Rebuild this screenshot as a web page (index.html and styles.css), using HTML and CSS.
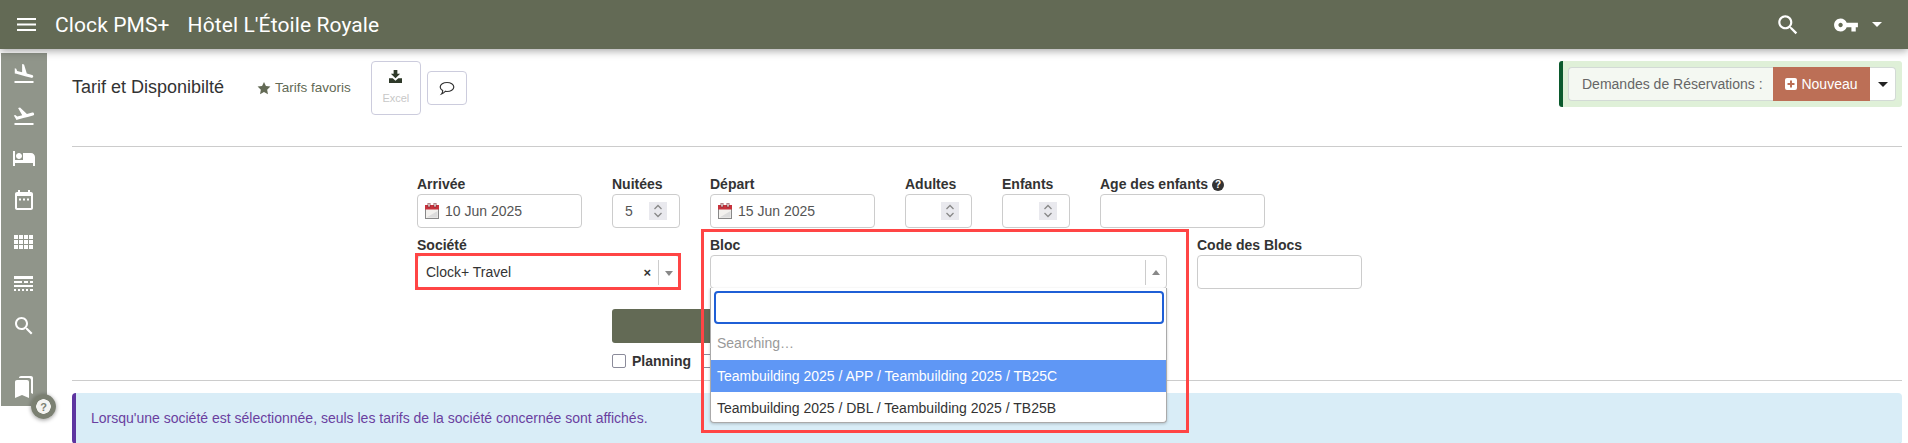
FILE: index.html
```html
<!DOCTYPE html>
<html lang="fr">
<head>
<meta charset="utf-8">
<title>Tarif et Disponibilté</title>
<link rel="stylesheet" href="styles.css">
</head>
<body>
<header class="topbar">
  <svg class="burger" viewBox="0 0 19 13"><rect width="19" height="2" y="0"/><rect width="19" height="2" y="5.5"/><rect width="19" height="2" y="11"/></svg>
  <span class="brand">Clock PMS+</span>
  <span class="hotel">Hôtel L'Étoile Royale</span>
  <svg class="top-search" viewBox="0 0 24 24"><path d="M15.5 14h-.79l-.28-.27C15.41 12.59 16 11.11 16 9.5 16 5.91 13.09 3 9.5 3S3 5.91 3 9.5 5.91 16 9.5 16c1.61 0 3.09-.59 4.23-1.57l.27.28v.79l5 4.99L20.49 19l-4.99-5zm-6 0C7.01 14 5 11.99 5 9.5S7.01 5 9.5 5 14 7.01 14 9.5 11.99 14 9.5 14z"/></svg>
  <svg class="top-key" viewBox="0 0 24 24"><path d="M12.65 10C11.83 7.67 9.61 6 7 6c-3.31 0-6 2.69-6 6s2.69 6 6 6c2.61 0 4.83-1.67 5.65-4H17v4h4v-4h2v-4H12.65zM7 14c-1.1 0-2-.9-2-2s.9-2 2-2 2 .9 2 2-.9 2-2 2z"/></svg>
  <span class="top-caret"></span>
</header>

<div class="shell">
  <nav class="sidebar">
    <svg class="nav-icon" viewBox="0 0 24 24"><path d="M2.5 19h19v2h-19v-2zm7.18-5.73l4.35 1.16 5.31 1.42c.8.21 1.62-.26 1.84-1.06.21-.8-.26-1.62-1.06-1.84l-5.31-1.42-2.76-9.02L10.12 2v8.28L5.15 8.95l-.93-2.32-1.45-.39v5.17l1.6.43 5.31 1.43z"/></svg>
    <svg class="nav-icon" viewBox="0 0 24 24"><path d="M2.5 19h19v2h-19v-2zm19.57-9.36c-.21-.8-1.04-1.28-1.84-1.06L14.92 10l-6.9-6.43-1.93.51 4.14 7.17-4.97 1.33-1.97-1.54-1.45.39 1.82 3.16.77 1.33 1.6-.43 5.31-1.42 4.35-1.16L21 11.49c.81-.23 1.28-1.05 1.07-1.85z"/></svg>
    <svg class="nav-icon" viewBox="0 0 24 24"><path d="M7 13c1.66 0 3-1.34 3-3S8.66 7 7 7s-3 1.34-3 3 1.34 3 3 3zm12-6h-8v7H3V5H1v15h2v-3h18v3h2v-9c0-2.21-1.79-4-4-4z"/></svg>
    <svg class="nav-icon" viewBox="0 0 24 24"><path d="M19 4h-1V2h-2v2H8V2H6v2H5c-1.1 0-2 .9-2 2v14c0 1.1.9 2 2 2h14c1.1 0 2-.9 2-2V6c0-1.1-.9-2-2-2zm0 16H5V8h14v12z"/><rect x="7" y="10.5" width="2" height="2"/><rect x="11" y="10.5" width="2" height="2"/><rect x="15" y="10.5" width="2" height="2"/></svg>
    <svg class="nav-icon" viewBox="0 0 24 24"><path d="M2 5h4v4H2zM7 5h4v4H7zM12 5h4v4h-4zM17 5h4v4h-4zM2 10h4v4H2zM7 10h4v4H7zM12 10h4v4h-4zM17 10h4v4h-4zM2 15h4v4H2zM7 15h4v4H7zM12 15h4v4h-4zM17 15h4v4h-4z"/></svg>
    <svg class="nav-icon" viewBox="0 0 24 24"><path d="M2 4h19v3H2zM2 9h8v2H2zM12 9h4v2h-4zM18 9h3v2h-3zM2 13h19v2H2zM2 17h2v2H2zM6 17h2v2H6zM10 17h2v2h-2zM14 17h2v2h-2zM18 17h3v2h-3z"/></svg>
    <svg class="nav-icon" viewBox="0 0 24 24"><path d="M15.5 14h-.79l-.28-.27C15.41 12.59 16 11.11 16 9.5 16 5.91 13.09 3 9.5 3S3 5.91 3 9.5 5.91 16 9.5 16c1.61 0 3.09-.59 4.23-1.57l.27.28v.79l5 4.99L20.49 19l-4.99-5zm-6 0C7.01 14 5 11.99 5 9.5S7.01 5 9.5 5 14 7.01 14 9.5 11.99 14 9.5 14z"/></svg>
    <span class="nav-sep"></span>
    <svg class="nav-icon" viewBox="0 0 24 24"><path d="M19 18l2 1V3c0-1.1-.9-2-2-2H8.99C7.89 1 7 1.9 7 3h10c1.1 0 2 .9 2 2v13zM15 5H5c-1.1 0-2 .9-2 2v16l7-3 7 3V7c0-1.1-.9-2-2-2z"/></svg>
    <span class="help">?</span>
  </nav>

  <main class="main">
    <section class="page-head">
      <h1 class="title">Tarif et Disponibilté</h1>
      <span class="favs">
        <svg class="star" viewBox="0 0 24 24"><path d="M12 1.5l3.3 7 7.7 1-5.6 5.3 1.4 7.7-6.800-3.700-6.800 3.700 1.400-7.700L1 9.500l7.700-1z"/></svg>
        Tarifs favoris
      </span>
      <button class="excel-btn">
        <svg class="dl-icon" viewBox="0 0 14 14"><path d="M5 0h4v4h3L7 9 2 4h3zM0 9h4l3 2.500L10 9h4v5H0z"/></svg>
        <span>Excel</span>
      </button>
      <button class="comment-btn">
        <svg class="comment-icon" viewBox="0 0 16 15"><path d="M8 1.500c3.700 0 6.800 1.900 6.800 4.500S11.700 10.500 8 10.500c-.6 0-1.200 0-1.700-.2-.9.900-2.300 2.200-3.800 2.700.8-1 1.300-2 1.200-3.400C2.200 8.800 1.200 7.500 1.200 6c0-2.600 3.100-4.500 6.800-4.500z"/></svg>
      </button>
      <div class="requests">
        <span class="req-label">Demandes de Réservations :</span>
        <button class="req-new">
          <svg class="plus" viewBox="0 0 12 12"><path d="M2 0h8a2 2 0 0 1 2 2v8a2 2 0 0 1-2 2H2a2 2 0 0 1-2-2V2a2 2 0 0 1 2-2zm3 2.500v2.500H2.500v2H5v2.500h2V7h2.500V5H7V2.500z"/></svg>
          Nouveau
        </button>
        <button class="req-caret"><span></span></button>
      </div>
    </section>

    <section class="form">
      <div class="row">
        <div class="field w-date">
          <label>Arrivée</label>
          <div class="box">
            <svg class="cal" viewBox="0 0 14 16"><rect x=".5" y="2.500" width="13" height="13" fill="#f3f1ee" stroke="#888"/><rect x="0" y="2" width="14" height="4.500" fill="#c8323c"/><path d="M1.500 14.500L12.500 8v6.500z" fill="#dcdcdc"/><rect x="3" y="0" width="2" height="4" fill="#fff" stroke="#7a2a30" stroke-width=".7"/><rect x="9" y="0" width="2" height="4" fill="#fff" stroke="#7a2a30" stroke-width=".7"/></svg>
            <span>10 Jun 2025</span>
          </div>
        </div>
        <div class="field w-num">
          <label>Nuitées</label>
          <div class="box"><span>5</span>
            <span class="spin"><svg viewBox="0 0 18 18"><path d="M5.500 7L9 3.500 12.500 7M5.500 11L9 14.500 12.500 11"/></svg></span>
          </div>
        </div>
        <div class="field w-date">
          <label>Départ</label>
          <div class="box">
            <svg class="cal" viewBox="0 0 14 16"><rect x=".5" y="2.500" width="13" height="13" fill="#f3f1ee" stroke="#888"/><rect x="0" y="2" width="14" height="4.500" fill="#c8323c"/><path d="M1.500 14.500L12.500 8v6.500z" fill="#dcdcdc"/><rect x="3" y="0" width="2" height="4" fill="#fff" stroke="#7a2a30" stroke-width=".7"/><rect x="9" y="0" width="2" height="4" fill="#fff" stroke="#7a2a30" stroke-width=".7"/></svg>
            <span>15 Jun 2025</span>
          </div>
        </div>
        <div class="field w-adult">
          <label>Adultes</label>
          <div class="box"><span class="spin"><svg viewBox="0 0 18 18"><path d="M5.500 7L9 3.500 12.500 7M5.500 11L9 14.500 12.500 11"/></svg></span></div>
        </div>
        <div class="field w-num">
          <label>Enfants</label>
          <div class="box"><span class="spin"><svg viewBox="0 0 18 18"><path d="M5.500 7L9 3.500 12.500 7M5.500 11L9 14.500 12.500 11"/></svg></span></div>
        </div>
        <div class="field w-date">
          <label>Age des enfants <span class="q">?</span></label>
          <div class="box"></div>
        </div>
      </div>

      <div class="row">
        <div class="field w-company">
          <label>Société</label>
          <div class="box select">
            <span>Clock+ Travel</span>
            <span class="clear">×</span>
            <span class="sel-sep"></span>
            <span class="arrow-down"></span>
            <span class="mark mark-company"></span>
          </div>
        </div>
        <div class="field w-bloc">
          <label>Bloc</label>
          <div class="box select">
            <span class="sel-sep"></span>
            <span class="arrow-up"></span>
          </div>
          <div class="dropdown">
            <div class="dd-search"></div>
            <div class="dd-item dd-muted">Searching…</div>
            <div class="dd-item dd-active">Teambuilding 2025 / APP / Teambuilding 2025 / TB25C</div>
            <div class="dd-item">Teambuilding 2025 / DBL / Teambuilding 2025 / TB25B</div>
          </div>
          <span class="mark mark-bloc"></span>
        </div>
        <div class="field w-date">
          <label>Code des Blocs</label>
          <div class="box"></div>
        </div>
      </div>

      <div class="actions">
        <div class="submit"></div>
        <div class="checks">
          <span class="check"></span><span class="check-label">Planning</span>
          <span class="check check-next"></span>
        </div>
      </div>
    </section>

    <div class="info">Lorsqu'une société est sélectionnée, seuls les tarifs de la société concernée sont affichés.</div>
  </main>
</div>
</body>
</html>
```
FILE: styles.css
```css
* { box-sizing: border-box; }
html, body { margin: 0; padding: 0; }
body {
  width: 1908px;
  height: 443px;
  overflow: hidden;
  background: #fff;
  color: #333;
  font-family: "Liberation Sans", Arial, sans-serif;
  font-size: 14px;
}

/* top bar */
.topbar {
  position: relative;
  z-index: 5;
  display: flex;
  align-items: center;
  height: 49px;
  padding-left: 17px;
  background: #636a55;
  color: #fff;
  box-shadow: 0 2px 8px rgba(0, 0, 0, .35);
}
.topbar svg { fill: #fff; display: block; }
.burger { width: 19px; height: 13px; margin-right: 19px; }
.brand, .hotel { font-family: Roboto, sans-serif; font-size: 21px; letter-spacing: .1px; }
.hotel { margin-left: 18px; }
.top-search { width: 26px; height: 26px; margin-left: auto; }
.top-key { width: 26px; height: 26px; margin-left: 32px; }
.top-caret {
  width: 0; height: 0;
  margin: 0 26px 0 13px;
  border-left: 5px solid transparent;
  border-right: 5px solid transparent;
  border-top: 5px solid #fff;
}

/* layout */
.shell { display: flex; align-items: flex-start; }

/* sidebar */
.sidebar {
  position: relative;
  display: flex;
  flex-direction: column;
  align-items: center;
  flex: none;
  width: 46px;
  height: 353px;
  margin: 4px 0 0 1px;
  padding-top: 0;
  background: #90958a;
}
.nav-icon { flex: none; width: 24px; height: 24px; margin: 9px 0; fill: #fff; display: block; }
.nav-sep { width: 14px; height: 1px; margin: 9px 0 10px; background: #b5b9ae; }
.help {
  position: absolute;
  left: 30px;
  top: 341px;
  width: 25px;
  height: 25px;
  border-radius: 50%;
  box-shadow: 0 1px 4px rgba(0, 0, 0, .4);
  display: flex;
  align-items: center;
  justify-content: center;
  color: #7b8072;
  font-size: 11px;
  font-weight: bold;
  background-image: radial-gradient(circle at center, #f4f4f2 0, #f4f4f2 7px, #7b8072 7.5px);
}

/* main */
.main { flex: 1; min-width: 0; margin: 0 6px 0 25px; }

.page-head {
  display: flex;
  align-items: flex-start;
  height: 98px;
  padding-top: 12px;
  border-bottom: 1px solid #ccc;
}
.title {
  margin: 16px 33px 0 0;
  font-size: 18px;
  line-height: 20px;
  font-weight: normal;
  color: #333;
}
.favs {
  display: flex;
  align-items: center;
  gap: 4px;
  margin: 19px 20px 0 0;
  font-size: 13.5px;
  line-height: 16px;
  color: #636a55;
}
.star { width: 14px; height: 14px; fill: #636a55; }
.excel-btn, .comment-btn {
  border: 1px solid #ccd;
  border-radius: 4px;
  background: #fff;
  padding: 0;
  font-family: inherit;
}
.excel-btn {
  display: flex;
  flex-direction: column;
  align-items: center;
  width: 50px;
  height: 54px;
  padding-top: 8px;
  font-size: 11px;
  color: #c8c8c8;
}
.excel-btn span { margin-top: 9px; }
.dl-icon { width: 13px; height: 13px; fill: #2f3a2a; }
.comment-btn {
  display: flex;
  align-items: center;
  justify-content: center;
  width: 40px;
  height: 34px;
  margin: 10px 0 0 6px;
}
.comment-icon { width: 16px; height: 15px; fill: none; stroke: #333; stroke-width: 1.2; }

.requests {
  display: flex;
  align-items: stretch;
  height: 46px;
  width: 343px;
  margin-left: auto;
  padding: 6px 6px 6px 5px;
  background: #dff0d8;
  border-left: 4px solid #0b5a2d;
  border-radius: 3px;
}
.req-label {
  display: flex;
  align-items: center;
  width: 205px;
  padding-left: 13px;
  background: #f4f8f2;
  border: 1px solid #d3dad6;
  border-right: 0;
  border-radius: 4px 0 0 4px;
  color: #666;
}
.req-new {
  display: flex;
  align-items: center;
  justify-content: center;
  gap: 4px;
  width: 97px;
  border: 0;
  background: #bc6f56;
  color: #fff;
  font: inherit;
}
.plus { width: 12px; height: 12px; fill: #fff; }
.req-caret {
  flex: 1;
  display: flex;
  align-items: center;
  justify-content: center;
  background: #fff;
  border: 1px solid #d3dad6;
  border-left: 0;
  border-radius: 0 4px 4px 0;
  padding: 0;
}
.req-caret span {
  width: 0; height: 0;
  border-left: 5px solid transparent;
  border-right: 5px solid transparent;
  border-top: 5px solid #222;
}

/* form */
.form {
  height: 234px;
  padding: 31px 0 0 345px;
  border-bottom: 1px solid #ccc;
}
.row { display: flex; gap: 30px; margin-bottom: 11px; }
.field { position: relative; flex: none; }
.w-date { width: 165px; }
.w-num { width: 68px; }
.w-adult { width: 67px; }
.w-company { width: 263px; }
.w-bloc { width: 457px; }
.field label {
  display: block;
  height: 16px;
  font-size: 14px;
  line-height: 12px;
  font-weight: bold;
  color: #333;
  white-space: nowrap;
}
.q {
  display: inline-block;
  width: 12px;
  height: 12px;
  border-radius: 50%;
  background: #333;
  color: #fff;
  font-size: 10px;
  line-height: 12px;
  text-align: center;
  vertical-align: 1px;
}
.box {
  position: relative;
  display: flex;
  align-items: center;
  height: 34px;
  padding: 0 12px 0 12px;
  border: 1px solid #ccc;
  border-radius: 4px;
  background: #fff;
  color: #555;
  font-size: 14px;
}
.cal { width: 14px; height: 16px; margin: 0 6px 0 -5px; flex: none; }
.spin {
  width: 18px;
  height: 18px;
  margin-left: auto;
  background: #e9e9ee;
}
.spin svg { display: block; width: 18px; height: 18px; fill: none; stroke: #888; stroke-width: 1.3; }

.select { padding-left: 8px; color: #333; }
.clear { margin-left: auto; font-size: 13px; font-weight: bold; color: #333; }
.sel-sep { width: 1px; height: 25px; margin: 0 6px 0 7px; background: #ccc; }
.select .sel-sep:first-child { margin-left: auto; }
.arrow-down, .arrow-up {
  width: 0; height: 0;
  margin-right: -6px;
  border-left: 4px solid transparent;
  border-right: 4px solid transparent;
}
.arrow-down { border-top: 5px solid #888; margin-top: 2px; }
.arrow-up { border-bottom: 5px solid #888; margin-top: 0; }

.dropdown {
  position: absolute;
  z-index: 3;
  left: 0;
  right: 0;
  top: 49px;
  height: 135px;
  background: #fff;
  border: 1px solid #aaa;
  border-top: 0;
  border-radius: 0 0 4px 4px;
  box-shadow: 0 1px 3px rgba(0, 0, 0, .2);
  padding-top: 3px;
}
.dd-search {
  height: 33px;
  margin: 0 2px 3px 3px;
  border: 2px solid #1f5fd6;
  border-radius: 4px;
}
.dd-item {
  height: 32px;
  padding-left: 6px;
  line-height: 32px;
  color: #333;
  white-space: nowrap;
}
.dd-muted { height: 33px; line-height: 33px; color: #999; }
.dd-active { background: #5f97f5; color: #fff; }

.mark { position: absolute; z-index: 4; border: 3px solid #ff4545; pointer-events: none; }
.mark-company { left: -3px; right: -2px; top: -3px; bottom: -2px; }
.mark-bloc { left: -9px; top: -10px; width: 488px; height: 204px; }

.actions { margin-left: 195px; padding-top: 9px; }
.submit { width: 400px; height: 34px; background: #636a55; border-radius: 3px; }
.checks { display: flex; align-items: center; height: 16px; margin-top: 10px; }
.check {
  width: 14px;
  height: 14px;
  border: 1px solid #8b8b9a;
  border-radius: 2px;
  background: #fff;
}
.check-label { margin-left: 6px; font-weight: bold; color: #333; }
.check-next { margin-left: 11px; }

/* info */
.info {
  display: flex;
  align-items: center;
  height: 51px;
  margin-top: 12px;
  padding-left: 15px;
  background: #d9edf7;
  border-left: 4px solid #5e35a0;
  border-bottom: 1px solid #bce8f1;
  border-radius: 4px;
  color: #6a3fa0;
  font-size: 14px;
}
```
